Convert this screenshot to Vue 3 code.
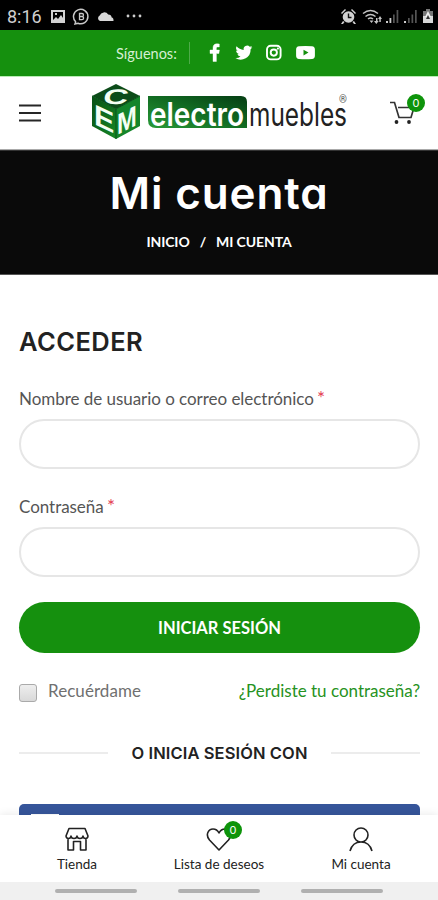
<script setup>
const tabs = [
  { id: 'shop', label: 'Tienda' },
  { id: 'wishlist', label: 'Lista de deseos', count: 0 },
  { id: 'account', label: 'Mi cuenta' },
]
</script>

<template>
  <div class="screen">
    <div class="status">
      <span class="clock">8:16</span>
      <svg class="status-left" width="96" height="18" viewBox="0 0 96 18">
        <path fill="#d2d2d2" fill-rule="evenodd" d="M1 2h14v13H1zM3 4v8l3-3 2 2 3-4 2 3V4zM5 5h2v2H5z" />
        <path d="M25.500 14.500 25 16l3-.8a7.200 7.200 0 1 0-2.500-1.700z" fill="none" stroke="#c8c8c8" stroke-width="1.500" />
        <path d="M29.500 5.500h2.500a1.500 1.500 0 0 1 0 3h-2.500zm0 3H32a1.600 1.600 0 0 1 0 3.200h-2.500z" fill="none" stroke="#c8c8c8" stroke-width="1.300" />
        <path fill="#d8d8d8" d="M50 13a3 3 0 0 1-.3-5.500 4.800 4.800 0 0 1 8.500-1 3.500 3.500 0 0 1 3.500 3q2 .3 1.800 3.500z" />
        <circle cx="78" cy="8" r="1.400" fill="#ccc" /><circle cx="84" cy="8" r="1.400" fill="#ccc" /><circle cx="90" cy="8" r="1.400" fill="#ccc" />
      </svg>
      <svg class="status-right" width="96" height="18" viewBox="0 0 96 18">
        <g fill="#d2d2d2">
          <circle cx="9.500" cy="9" r="5.800" />
          <path d="m2 5 4-4 1 1-4 4zM17 5l-4-4-1 1 4 4zM4 13l1.500 1L4 16H2zM15 13l-1.500 1 1.500 2h2z" />
        </g>
        <path d="M9.500 5.500V9.500h3" fill="none" stroke="#111" stroke-width="1.400" />
        <g fill="none" stroke="#c4c4c4" stroke-width="1.500">
          <path d="M24 5.500q7.500-6 15 0M26.500 8.500q5-4 10 0M29 11q2.500-2 5 0" />
        </g>
        <path fill="#c4c4c4" d="m30.500 12.500 2 2.500 2-2.500zM35 13h2v-3h1.500v3h1.200L37.300 16zM39 11l2-3 2 3h-1.200v3h-1.500v-3z" />
        <path fill="#ccc" d="M47 13h2v2h-2zM50.500 10h1.800v5h-1.800zM65 13h2v2h-2z" />
        <path fill="#555" d="M54 6.500h1.700V15H54zM57.600 2h1.700v13h-1.700zM69 10h1.700v5H69zM72.500 6.500h1.700V15h-1.700zM76 2h1.700v13H76z" />
        <path fill="#777" d="M87 1h4v2h3v5H84V3h3z" /><path fill="#d8d8d8" d="M84 8h10v7H84z" />
        <path fill="#eee" d="m89 3-3 6h6z" /><path fill="#333" d="m89 7-2 4h4z" />
      </svg>
    </div>

    <div class="social">
      <span class="follow">Síguenos:</span>
      <span class="rule"></span>
      <svg width="112" height="20" viewBox="0 0 112 20" fill="#fff">
        <path d="M6 18.500v-8H3V7h3V4.800C6 2 7.600.8 10 .8l2.300.2v3h-1.500C9.600 4 9.400 4.700 9.400 5.500V7h3l-.5 3.500H9.400v8z" stroke="#fff" stroke-width=".4" />
        <path d="M45.300 4.200a7 7 0 0 1-1.900.5 3.300 3.300 0 0 0 1.500-1.800 7 7 0 0 1-2.200.8 3.500 3.500 0 0 0-6 3.200 10 10 0 0 1-7.100-3.600 3.500 3.500 0 0 0 1.100 4.600 3.400 3.400 0 0 1-1.600-.4c0 1.800 1.200 3.200 2.800 3.500a3.500 3.500 0 0 1-1.600.1 3.500 3.500 0 0 0 3.200 2.400 7 7 0 0 1-5.100 1.500 9.900 9.900 0 0 0 15.200-8.800 7 7 0 0 0 1.700-2z" />
        <g fill="none" stroke="#fff" stroke-width="1.900"><rect x="60" y="2.800" width="13.600" height="13.600" rx="3.700" /><circle cx="66.800" cy="9.600" r="3.100" /></g>
        <circle cx="70.900" cy="5.600" r="1.100" />
        <path fill-rule="evenodd" d="M92 3.200q6.500-.6 13 0 2.900.3 2.900 3.200v6.400q0 2.900-2.900 3.200-6.500.5-13 0-2.900-.3-2.900-3.200V6.400q0-2.900 2.900-3.200zM96.500 6.800v5.600l5-2.800z" />
      </svg>
    </div>

    <header class="header">
      <svg class="burger" width="24" height="20" viewBox="0 0 24 20"><path d="M1 2.500h22M1 10h22M1 17.500h22" stroke="#262626" stroke-width="1.900" /></svg>
      <svg class="logo" width="264" height="60" viewBox="0 0 264 60">
        <defs>
          <linearGradient id="brand" x1="0" x2="1" y1="1" y2="0"><stop stop-color="#2a9a38" /><stop offset=".5" stop-color="#126d23" /><stop offset="1" stop-color="#053d13" /></linearGradient>
          <linearGradient id="face" x1="0" x2="1" y2="1"><stop stop-color="#075015" /><stop offset="1" stop-color="#178724" /></linearGradient>
        </defs>
        <path d="M26 2 50 14 26 27 2 14z" fill="#0c4c19" />
        <path d="M2 14 26 27v30L2 44z" fill="url(#face)" />
        <path d="M50 14 26 27v30l24-13z" fill="#14852a" />
        <path d="M26 27v30M2 14l24 13 24-13" fill="none" stroke="#07531a" />
        <text class="cube" transform="matrix(1.650 0 -.2 1 12 22)" font-size="21">C</text>
        <text class="cube" transform="matrix(1.050 .5 0 1 4 42)" font-size="29">E</text>
        <text class="cube" transform="matrix(.82 -.42 0 1 27 53)" font-size="29">M</text>
        <path d="M58 14h93q6 0 6 6v26H66q-8 0-8-8z" fill="url(#brand)" />
        <text class="word light" x="60" y="43.500" textLength="94" lengthAdjust="spacingAndGlyphs">electro</text>
        <text class="word dark" x="159" y="43.500" textLength="98" lengthAdjust="spacingAndGlyphs">muebles</text>
        <text class="reg" x="249" y="21">®</text>
      </svg>
      <div class="cart">
        <svg width="26" height="26" viewBox="0 0 26 26"><path d="M1 2.500h4.500l4.500 15h12l3-10H9" fill="none" stroke="#333" stroke-width="1.700" /><circle cx="7.500" cy="22" r="1.900" fill="#222" /><circle cx="20" cy="22" r="1.900" fill="#222" /></svg>
        <span class="badge">0</span>
      </div>
    </header>

    <section class="hero">
      <h1>Mi cuenta</h1>
      <nav class="crumbs"><span>INICIO</span><span>/</span><span>MI CUENTA</span></nav>
    </section>

    <main class="main">
      <h2>ACCEDER</h2>
      <label for="user">Nombre de usuario o correo electrónico <b>*</b></label>
      <input id="user" class="field" type="text" />
      <label class="second" for="pass">Contraseña <b>*</b></label>
      <input id="pass" class="field" type="password" />
      <button class="submit">INICIAR SESIÓN</button>
      <div class="options">
        <span class="remember"><i class="check"></i>Recuérdame</span>
        <a class="lost">¿Perdiste tu contraseña?</a>
      </div>
      <div class="divider"><span>O INICIA SESIÓN CON</span></div>
      <div class="facebook"><i></i></div>
    </main>

    <nav class="tabs">
      <div v-for="tab in tabs" :key="tab.id" class="tab">
        <div class="tab-icon">
          <svg width="26" height="26" viewBox="0 0 26 26" fill="none" stroke="#222" stroke-width="1.600" stroke-linejoin="round">
            <path v-if="tab.id === 'shop'" d="M5 2.500h16l3 7.500q-.2 2.500-2.500 2.500Q19.300 12.500 19 10q-.3 2.500-3 2.500T13 10q-.3 2.500-3 2.500T7 10q-.3 2.500-2.500 2.500T2 10zM4 12.500V24h5.500v-8.500h7V24H22V12.500" />
            <path v-else-if="tab.id === 'wishlist'" d="M13 24 3.500 14C-1 8.500 2.500 3 7 3q4 0 6 4 2-4 6-4c4.500 0 8 5.500 3.500 11z" />
            <path v-else d="M13 2a7 7 0 1 1 0 14 7 7 0 0 1 0-14zM2 25q2.500-9 11-9t11 9" />
          </svg>
          <span v-if="tab.count !== undefined" class="badge small">{{ tab.count }}</span>
        </div>
        <span class="tab-label">{{ tab.label }}</span>
      </div>
    </nav>
    <div class="system"><i></i><i></i><i></i></div>
  </div>
</template>

<style>
body { background: #fff; }
</style>

<style scoped>
* { box-sizing: border-box; }
.screen { width: 438px; height: 900px; display: flex; flex-direction: column; overflow: hidden; background: #fff; color: #555; font-family: Lato, sans-serif; }
.status { height: 30px; flex: none; display: flex; align-items: center; padding: 3px 7px 0; background: #000; }
.clock { width: 43px; color: #cfcfcf; font: 18px Roboto, sans-serif; }
.status-right { margin-left: auto; margin-right: -4px; }
.social { height: 46px; flex: none; display: flex; align-items: center; padding-left: 116px; background: #15900e; color: #d5efd3; }
.follow { width: 73px; font-size: 14.500px; white-space: nowrap; }
.rule { width: 1px; height: 22px; margin-right: 17px; background: #4eab49; }
.header { height: 74px; flex: none; display: flex; align-items: center; padding: 0 12px 0 18px; border-top: 1px solid #b9edb5; border-bottom: 1px solid #aaa; }
.logo { margin: -2px 0 0 48px; }
.cube { fill: #f4fff3; font-family: "Liberation Sans", sans-serif; font-weight: 700; }
.word { font-family: Inter, sans-serif; font-size: 32px; font-feature-settings: "cv11"; }
.light { fill: #fff; font-weight: 600; }
.dark { fill: #222; font-weight: 400; }
.reg { fill: #555; font: 10px Roboto, sans-serif; }
.cart { position: relative; margin-left: auto; width: 37px; height: 26px; }
.badge { position: absolute; right: 1px; top: -6px; width: 18px; height: 18px; border-radius: 50%; background: #0e940b; color: #fff; font-size: 11px; line-height: 18px; text-align: center; }
.hero { height: 125px; flex: none; display: flex; flex-direction: column; align-items: center; background: #0a0a0a; border-top: 1px solid #333; border-bottom: 1px solid #555; color: #fff; }
h1 { margin: 12px 0 0; font: 600 44px/60px Inter, sans-serif; font-feature-settings: "cv11"; letter-spacing: 0.850px; }
.crumbs { display: flex; gap: 10px; margin-top: 9px; font-size: 14px; font-weight: 700; line-height: 20px; letter-spacing: -0.100px; }
.main { flex: 1; min-height: 0; overflow: hidden; padding: 50px 18px 0 19px; display: flex; flex-direction: column; }
h2 { margin: 0 0 28px; color: #222; font: 600 25.500px/34px Inter, sans-serif; letter-spacing: 0.450px; }
label { line-height: 24px; font-size: 17px; letter-spacing: -0.040px; white-space: nowrap; margin-bottom: 8px; }
label.second { margin-top: 26px; }
label b { color: #e33b50; font-size: 19px; line-height: 1; font-weight: 400; margin-left: -1px; }
.field { width: 100%; height: 50px; flex: none; border: 2px solid #e6e6e6; border-radius: 25px; background: #fff; padding: 0 20px; }
.submit { height: 51px; flex: none; margin-top: 25px; border: 0; border-radius: 26px; background: #15900e; color: #fff; font: 700 16.500px Lato, sans-serif; }
.options { display: flex; justify-content: space-between; align-items: center; margin-top: 26px; line-height: 24px; font-size: 17px; }
.remember { display: flex; align-items: center; color: #707070; letter-spacing: 0.060px; }
.check { width: 18px; height: 18px; margin: 3px 11px 0 0; border: 1px solid #aaa; border-radius: 3px; background: linear-gradient(#eee, #d9d9d9); }
.lost { color: #269222; }
.divider { display: flex; align-items: center; gap: 23px; margin-top: 38px; color: #222; font: 600 16.500px/24px Inter, sans-serif; letter-spacing: 0.100px; white-space: nowrap; }
.divider::before, .divider::after { content: ""; flex: 1; height: 2px; background: #ececec; }
.facebook { height: 50px; flex: none; margin-top: 39px; border-radius: 5px; background: #36559a; padding: 10px 12px; }
.facebook i { display: block; width: 28px; height: 28px; background: #fff; }
.tabs { height: 67px; flex: none; display: flex; padding: 0 6px; background: #fff; box-shadow: 0 0 9px rgba(0, 0, 0, .1); color: #222; }
.tab { flex: 1; display: flex; flex-direction: column; align-items: center; padding-top: 11px; }
.tab-icon { position: relative; height: 26px; }
.tab-label { margin-top: 3px; font-size: 13.500px; line-height: 18px; white-space: nowrap; }
.badge.small { left: 18px; right: auto; top: -5px; }
.system { height: 18px; flex: none; display: flex; justify-content: center; gap: 41px; padding-top: 7px; background: #f0f0f0; }
.system i { width: 82px; height: 4px; border-radius: 2px; background: #b0b0b0; }
</style>
